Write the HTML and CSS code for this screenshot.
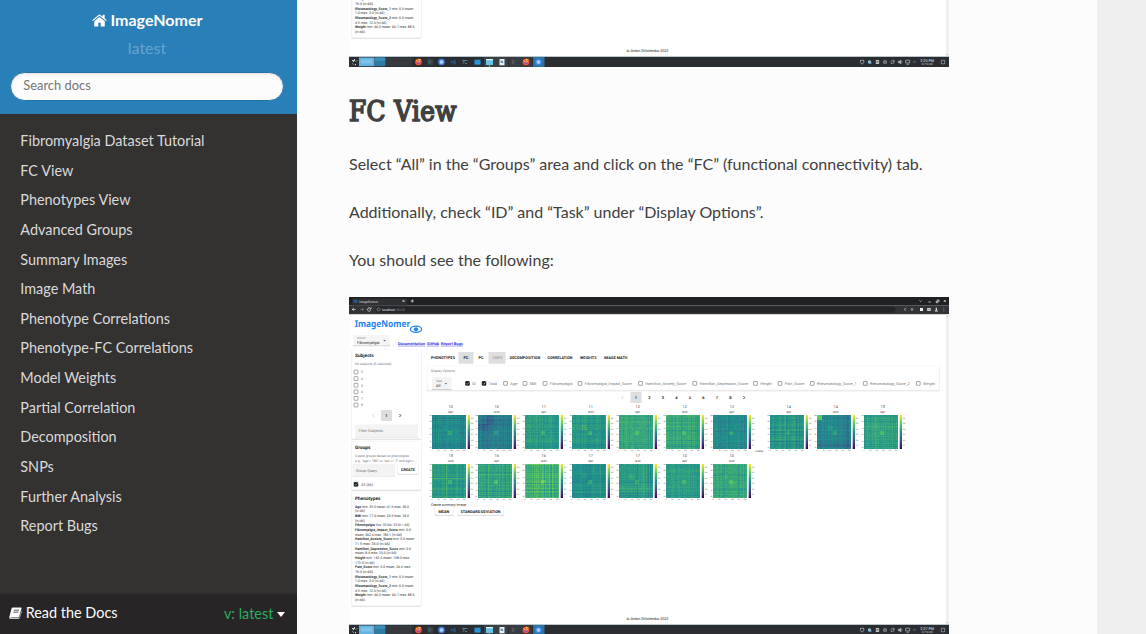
FILE: index.html
```html
<!DOCTYPE html>
<html lang="en">
<head>
<meta charset="utf-8">
<title>FC View — ImageNomer</title>
<link rel="stylesheet" href="styles.css">
</head>
<body>
<div class="page">
  <nav class="side">
    <div class="side-search">
      <a class="brand"><svg class="home" viewBox="0 0 15 13"><path d="M7.5 2.9 2.2 7.3V12c0 .4.2.6.6.6h3.5V8.8h2.4v3.8h3.500c.4 0 .6-.2.6-.6V7.300z"/><path d="M12.700 4.600V.8h-1.900v2L8.300.7a1.300 1.300 0 0 0-1.600 0L.2 6.200l.8.9 6.500-5.400L14 7.100l.8-.9z"/></svg> ImageNomer</a>
      <div class="version">latest</div>
      <input class="search" type="text" placeholder="Search docs">
    </div>
    <ul class="menu">
      <li>Fibromyalgia Dataset Tutorial</li><li>FC View</li><li>Phenotypes View</li><li>Advanced Groups</li><li>Summary Images</li><li>Image Math</li><li>Phenotype Correlations</li><li>Phenotype-FC Correlations</li><li>Model Weights</li><li>Partial Correlation</li><li>Decomposition</li><li>SNPs</li><li>Further Analysis</li><li>Report Bugs</li>
    </ul>
    <div class="versions">
      <span class="rtd"><svg class="book" viewBox="0 0 14 13"><path d="M4.200.5h8.300c.9 0 1.300.6 1 1.400l-2.500 8.500c-.2.700-.7 1.100-1.400 1.100H2c-.5 0-.6.600.1.700h8.100c.5 0 .8-.2 1-.7L13.700 4c.3.300.3.700.1 1.200l-2.300 6.600c-.3.700-.8 1.100-1.500 1.100H2C.8 12.900 0 12 .3 10.900L2.700 1.700C2.900.9 3.400.5 4.200.5z"/><path class="book-lines" d="M5.200 3.500h5.600M4.600 5.600h5.600"/></svg> Read the Docs</span>
      <span class="current">v: latest <i class="caret"></i></span>
    </div>
  </nav>
  <main class="content">
    <svg class="shot shot-tail" id="shot-a" viewBox="349 568 600 67"></svg>
    <h1>FC View</h1>
    <p>Select “All” in the “Groups” area and click on the “FC” (functional connectivity) tab.</p>
    <p>Additionally, check “ID” and “Task” under “Display Options”.</p>
    <p>You should see the following:</p>
    <svg class="shot shot-full" id="shot-b" viewBox="349 297 600 338"></svg>
  </main>
</div>
<script src="shots.js"></script>
</body>
</html>
```
FILE: styles.css
```css
* { box-sizing: border-box; }
body { margin: 0; height: 634px; overflow: hidden; background: #efefef; color: #404040; font-family: Lato, "Noto Sans", sans-serif; font-size: 16px; line-height: 24px; }
.page { display: flex; height: 634px; }
.side { width: 297px; flex: none; background: #343131; display: flex; flex-direction: column; }
.side-search { height: 114px; flex: none; background: #2980b9; color: #fcfcfc; display: flex; flex-direction: column; align-items: center; padding: 8px 13px 0 10px; }
.brand { font-weight: 700; line-height: 24px; }
.home { width: 15px; height: 13px; fill: #fcfcfc; vertical-align: -1px; }
.version { color: rgba(255, 255, 255, .3); line-height: 24px; margin-top: 4px; }
.search { width: 273.500px; height: 29px; margin-top: 12px; padding: 0 12px 3px; border: 1px solid #2472a4; border-radius: 50px; background: #fcfcfc; box-shadow: inset 0 1px 3px #ddd; font: 12.900px Lato, sans-serif; color: #404040; }
.search::placeholder { color: #757575; }
.menu { list-style: none; margin: 0; padding: 12px 20px 0 20.300px; flex: 1; color: #d9d9d9; font-size: 14.430px; line-height: 29.620px; }
.versions { height: 40px; flex: none; background: #272525; color: #fcfcfc; display: flex; justify-content: space-between; padding: 7px 12px 0 9px; font-size: 14.430px; }
.book { width: 13px; height: 12px; fill: #fcfcfc; vertical-align: -1px; }
.book-lines { stroke: #272525; stroke-width: .8; }
.current { color: #27ae60; padding-top: 1px; }
.caret { display: inline-block; border: 4.500px solid transparent; border-top-color: #fcfcfc; border-bottom: 0; border-top-width: 5px; vertical-align: 2px; }
.content { width: 800px; flex: none; background: #fcfcfc; padding: 0 52px; }
.shot { display: block; width: 600px; font-family: Roboto, sans-serif; text-rendering: geometricPrecision; }
.shot-tail { height: 67px; }
.shot-full { height: 338px; margin-top: 25px; }
h1 { margin: 26px 0 23px; height: 36px; font: 400 27.500px/37px "DejaVu Serif Condensed", "DejaVu Serif", serif; font-stretch: condensed; -webkit-text-stroke: 1.600px #404040; letter-spacing: .4px; }
p { margin: 0 0 24px; }
```
FILE: shots.js
```js
// Draws the application window figures used in the tutorial.
const GREY = '#777', INK = '#222';
let minY = 0;
function T(x, y, s, w, o = {}) {
  if (y < minY) return '';
  const len = w ? ` textLength="${w}" lengthAdjust="spacingAndGlyphs"` : '';
  return `<text x="${x}" y="${y}" font-size="${o.size || 3.8}" fill="${o.fill || INK}" font-weight="${o.bold ? 700 : 400}"${o.mid ? ' text-anchor="middle"' : ''}${len}${o.more || ''}>${s}</text>`;
}
function R(x, y, w, h, fill, more = '') {
  return `<rect x="${x}" y="${y}" width="${w}" height="${h}" fill="${fill}" ${more}/>`;
}
function P(d, stroke, w = .7, fill = 'none') {
  return `<path d="${d}" stroke="${stroke}" stroke-width="${w}" fill="${fill}"/>`;
}
function card(x, y, w, h) {
  return R(x, y, w, h + .8, '#dcdcdc', 'rx=".8"') + R(x + .2, y - .3, w - .4, h, '#fff', 'rx=".8" stroke="#f3f3f3" stroke-width=".5"');
}
function box(x, y, on) {
  return R(x - 1.9, y - 1.9, 3.8, 3.8, on ? '#111' : '#fff', `rx=".4" stroke="${on ? '#111' : '#777'}" stroke-width=".65"`) + (on ? P(`M${x - 1.2} ${y}l.9 1 1.700-2`, '#fff', .6) : '');
}
const STOPS = [[68,1,84],[59,82,139],[33,145,140],[94,201,98],[253,231,37]];
function viridis(t) {
  t = Math.max(0, Math.min(.999, t)) * 4;
  const i = Math.floor(t), f = t - i;
  return 'rgb(' + STOPS[i].map((c, k) => Math.round(c + (STOPS[i + 1][k] - c) * f)) + ')';
}
function heat(x, y, seed, base, contrast, spots) {
  let s = seed * 7919 + 13;
  const rnd = () => (s = (s * 16807) % 2147483647) / 2147483647;
  for (let k = 0; k < 6; k++) rnd();
  const n = 34, line = [], groups = {};
  for (let i = 0; i < n; i++) line.push((rnd() - .5) * (rnd() > .75 ? 1.5 : .5) * contrast);
  line[31] -= .05; line[29] -= .05;
  for (let i = 0; i < n; i++) for (let j = 0; j <= i; j++) {
    let v = base + line[i] + line[j] + (rnd() - .5) * .05;
    if (i > 15 && i < 20 && j > 15) v += .11;
    if (spots && i > 9 && i < 15 && j > 9 && j < 15) v += .05;
    if (spots === 2 && i < 5 && j < 5) v += .3;
    if (spots === 3 && i > 8 && i < 16 && j < 16) v -= .08;
    const q = Math.round(v * 30) / 30;
    groups[q] = (groups[q] || '') + `M${j} ${i}h1v1h-1z` + (i !== j ? `M${i} ${j}h1v1h-1z` : '');
  }
  let o = `<g transform="translate(${x} ${y})" shape-rendering="crispEdges">` + R(0, 0, 34, 34, viridis(base));
  for (const q in groups) o += `<path fill="${viridis(+q)}" d="${groups[q]}"/>`;
  o += '</g>' + R(x + 35.700, y, 2.300, 34, 'url(#viridis)');
  for (let k = 0; k < 6; k++) o += T(x + 38.700, y + 4 + k * 5.400, ['0.8', '0.6', '0.4', '0.2', '0.0', '-0.2'][k], 2.500, { size: 1.7 });
  ['0', '50', '100', '150', '200', '250'].forEach((t, k) => {
    o += T(x + k * 6.400, y + 36.200, t, 0, { size: 1.6, mid: 1 });
    o += T(x - 2.600, y + 1 + k * 6.400, t, 2, { size: 1.6 });
  });
  return o;
}
function firefox(x) {
  return `<circle cx="${x}" cy="630" r="3.300" fill="#ff4f37"/><circle cx="${x + .2}" cy="630.200" r="1.700" fill="#7849c8"/>` + P(`M${x - 2.500} 628q1 3 4 2l-1.500-3 2.500 1`, '#ffb52e', 1);
}
function chromium(x) {
  return `<circle cx="${x}" cy="630" r="3.300" fill="#3f7fe8"/><circle cx="${x}" cy="630" r="1.500" fill="#a9c8f8" stroke="#e6effd" stroke-width=".5"/>`;
}
function taskbar(time) {
  let o = R(349, 624.200, 600, .8, '#aab8bb') + R(349, 625, 600, 10, '#2a2e32');
  o += P('M352 628.500h1.500v1.500M354.500 627v2M357 628.500l-1 1M352.500 631.500l1 1M355.500 632v1.200', '#e9eef0', .9);
  o += R(359, 625.500, 15.500, 8.700, '#64b4df') + R(361, 627.500, 11, 4, '#7bc4e8') + R(375, 625.500, 10.500, 8.700, '#2d7ba1') + R(375, 625.500, 10, 3.500, '#388fb9') + R(386, 625.500, 26, 8.700, '#363a3e');
  o += R(484, 625, 24, 10, '#3b4044') + R(509, 625, 23, 10, '#373c40') + R(533, 625, 11.500, 10, '#2c75a0');
  o += firefox(418.500) + chromium(441.500) + firefox(526) + chromium(538.500);
  [430, 513.500].forEach(x => o += R(x - 2.500, 627.200, 5.500, 5.500, '#3c4348') + P(`M${x - 1.500} 628.300l2 1.700-2 1.700`, '#8b979d', .5));
  o += P('M450.800 628.500l4.200 3.400M450.800 631.500l4.200-3.400v4.500', '#2269a0', .9);
  o += P('M462.500 628.500h5M462.500 628.500l2 1.500-2 1.500M465 631.500h2', '#86a9bc', .6);
  o += R(474.500, 627.700, 6, 4.900, '#259be5') + P('M475 628l2.500 2 2.500-2', '#1768b5', .5);
  o += R(486, 627, 7, 6, '#65c2e9') + R(486, 627, 7, 1.200, '#d9f2f8') + R(488.800, 633.500, 1.300, 1.300, '#5ee675');
  o += R(499.500, 627, 5, 6.300, '#e8eef1') + P('M500.500 630h2.500M501 628.500l2 2.500', '#26729a', .9);
  const c = '#b9bec1';
  o += P('M860.500 628.300h3.500l-.5 2.500-1.300 1.500-1.500-1.500z', c) + `<circle cx="869.500" cy="630" r="1.700" fill="#9dbacb"/>` + R(870, 630.500, 1.500, 1.500, '#329ce0');
  o += R(875.800, 628, 3.300, 4, c) + R(876.500, 629.500, 1.800, .7, '#2a2e32');
  o += `<circle cx="885" cy="630" r="1.700" fill="none" stroke="#a9b0b3" stroke-width=".6"/>` + R(884.300, 629.300, 1.400, 1.400, '#aaa');
  o += P('M891 629h2.500v2.500h-2.500zM892 628.200h2.300v2.300', c, .5);
  o += P('M898.300 629.200h1l1.400-1.200v4l-1.400-1.200h-1z', c, .5, c) + P('M901.500 628.500q1 1.500 0 3', c, .5);
  o += P('M905.700 628.200h4v2.800h-4zM906.500 632.300h2.500', c) + P('M913 630.500l1.500-1.200 1.500 1.200', c, .5);
  o += T(920.300, 629.900, time, 13.800, { fill: '#e5e7e8', size: 4 }) + T(921.800, 633.300, '6/19/23', 11, { fill: '#d5d8da', size: 3 });
  return o + P('M941.300 628.300h3.400v3.500h-3.400z', c, .6);
}
const PHENO = [['Age','min: 29.0 mean: 41.6 max: 50.0',54],['','(n=66)',10],['BMI','min: 17.4 mean: 25.9 max: 34.0',54],['','(n=66)',10],['Fibromyalgia','Yes: 33 No: 33 (n = 66)',54.500],['Fibromyalgia_Impact_Score','min: 0.0',56],['','mean: 262.4 max: 786.1 (n=66)',47],['Hamilton_Anxiety_Score','min: 0.0 mean:',60],['','11.9 max: 35.0 (n=66)',35],['Hamilton_Depression_Score','min: 0.0',56],['','mean: 8.4 max: 25.0 (n=66)',41.500],['Height','min: 142.0 mean: 158.0 max:',55],['','173.0 (n=66)',19.500],['Pain_Score','min: 0.0 mean: 24.4 max:',56],['','76.0 (n=66)',18],['Rheumatology_Score_1','min: 0.0 mean:',59],['','1.0 max: 3.0 (n=66)',29.500],['Rheumatology_Score_2','min: 0.0 mean:',59],['','4.9 max: 12.0 (n=66)',31.500],['Weight','min: 46.0 mean: 64.7 max: 88.5',59.500],['','(n=66)',10]];
function draw(id, time, firstY) {
  minY = firstY;
  let o = `<defs><linearGradient id="viridis" x2="0" y2="1"><stop stop-color="#fde725"/><stop offset=".25" stop-color="#5ec962"/><stop offset=".5" stop-color="#21918c"/><stop offset=".75" stop-color="#3b528b"/><stop offset="1" stop-color="#440154"/></linearGradient></defs>`;
  o += R(349, 297, 600, 338, '#fff') + R(349, 297, 600, 8.300, '#202124') + R(352, 298.500, 55, 7, '#2f3034', 'rx="1"') + R(349, 305.300, 600, 8.700, '#323337') + R(349, 314, 600, .6, '#bbb');
  o += `<ellipse cx="355.500" cy="301.300" rx="1.700" ry="1" fill="none" stroke="#2486ef" stroke-width=".8"/>` + T(359, 302.500, 'ImageNomer', 19, { fill: '#d5d5d5', size: 3.500 });
  o += P('M402.500 300l2 2M404.500 300l-2 2M410.700 301h3.200M412.300 299.400v3.200', '#eee', .7) + P('M352.300 309.400h3.300M353.800 308l-1.500 1.400 1.500 1.400', '#eee', .7) + P('M360.300 309.400h3.300M362 308l1.500 1.400-1.500 1.400', '#888', .6) + P('M370.500 308.500a1.700 1.700 0 1 0 .2 1.700M371 307.500v1.500h-1.500', '#eee', .7);
  o += R(375.500, 306.500, 520, 6, '#242529', 'rx="3"') + `<circle cx="378.500" cy="309.400" r="1.500" fill="none" stroke="#aaa" stroke-width=".6"/>` + T(382, 310.700, 'localhost', 13, { fill: '#eee', size: 3.500 }) + T(395.300, 310.700, ':8008', 9.500, { fill: '#777', size: 3.500 });
  o += P('M919.500 300.500l1 1 1-1M928.300 302h2.500M936.200 301h1.700v1.700h-1.700zM937 300h2v2M943.800 300l2 2M945.800 300l-2 2', '#eee', .7) + P('M906.300 308l-2.200 1.400 2.200 1.400', '#ccc', .6) + `<circle cx="912" cy="309.400" r="1.300" fill="#888"/>` + R(920, 308, 3, 3, '#eee') + R(927.300, 308, 3.300, 3, '#eee') + R(928.500, 308.700, 1, 1.600, '#333') + P('M934.800 311h3M936.300 307.800v2.500', '#eee', 1.200) + P('M943.800 307.700v.8M943.800 309.200v.8M943.800 310.700v.8', '#aaa', .7);
  o += R(945.700, 314.600, 3.300, 310, '#f0f0f0') + P('M946.500 317l.8-.8.8.8M946.500 622l.8.8.8-.8', '#777', .4);
  o += T(354.700, 327.400, 'ImageNomer', 55.500, { size: 9.300, bold: 1, fill: '#2385f1', more: ' font-family="Noto Sans"' });
  o += `<ellipse cx="416" cy="329.300" rx="5.600" ry="3.100" fill="#fff" stroke="#2385f1" stroke-width="1.300"/><circle cx="416" cy="329.300" r="2.100" fill="#2385f1"/>`;
  o += R(353, 335, 37, 11, '#f5f5f5') + R(353, 345.700, 37, .4, '#aaa') + T(357, 338.800, 'Cohort', 8.500, { size: 3, fill: GREY }) + T(357, 343.500, 'Fibromyalgia', 22.500, { size: 4 }) + P('M383.300 340.200h2.400l-1.200 1.200z', '#555', .1, '#555');
  [[398,'Documentation',27],[427,'GitHub',12],[441,'Report Bugs',21.700]].forEach(a => o += T(a[0], 345.200, a[1], a[2], { size: 4, fill: '#3932e3', bold: 1 }) + R(a[0], 345.800, a[2], .45, '#3932e3'));
  o += card(351.500, 350, 70, 89) + card(351.500, 441.500, 70, 48.500) + card(351.500, 492, 70, 114);
  o += T(355, 356.800, 'Subjects', 18.700, { size: 4.700, bold: 1 }) + T(355, 364.500, '66 subjects (0 selected)', 36.500, { size: 3.400, fill: GREY });
  ['2','4','5','6','7','8'].forEach((t, i) => o += box(356, 372 + i * 6.600) + T(361, 373.300 + i * 6.600, t, 0, { fill: GREY, size: 3.600 }));
  o += R(381, 410, 11, 11, '#dedede') + T(386.500, 417, '1', 0, { mid: 1, bold: 1, size: 4 }) + P('M373.700 414.200l-1.200 1.300 1.200 1.300', '#bbb') + P('M399.500 414l1.300 1.500-1.300 1.500', '#222', .8);
  o += R(355, 424.500, 63, 13, '#f3f3f3') + R(355, 437, 63, .5, '#ddd') + T(358.500, 432, 'Filter Subjects', 24.500, { fill: GREY, size: 3.800 });
  o += T(355, 449, 'Groups', 15.500, { size: 4.700, bold: 1 }) + T(355, 457, 'Create groups based on phenotypes', 54, { size: 3.500, fill: GREY }) + T(355, 461.700, 'e.g., "age &gt; 180" or "sex == \'F\' and age &lt; ...', 62, { size: 3.500, fill: GREY });
  o += R(352.500, 464, 43, 12.300, '#f3f3f3') + R(352.500, 476, 43, .5, '#ddd') + T(356, 471.500, 'Group Query', 21, { fill: GREY, size: 3.700 }) + card(397.500, 464.500, 21, 9.700) + T(401, 471.400, 'CREATE', 14, { bold: 1 });
  o += box(356, 484.300, 1) + T(361, 485.700, 'All (66)', 12, { fill: '#555' }) + T(355, 499.700, 'Phenotypes', 25.500, { size: 4.700, bold: 1 });
  PHENO.forEach((a, i) => {
    // Lines without a name are wrapped continuations; widths are in figure units.
    o += T(355, 507.600 + i * 4.670, (a[0] ? `<tspan font-weight="700">${a[0]}</tspan> ` : '') + a[1], a[2], { size: 3.600, fill: '#333' });
  });
  o += R(458.500, 352, 15, 11.700, '#dedede') + R(488.500, 352, 17, 11.700, '#dedede');
  [[431,'PHENOTYPES',24],[463.500,'FC',5],[478.500,'PC',5],[492.500,'SNPS',10],[509.700,'DECOMPOSITION',30.500],[547.500,'CORRELATION',25],[580,'WEIGHTS',16.500],[604,'IMAGE MATH',23.500]].forEach(a => o += T(a[0], 359.200, a[1], a[2], { bold: 1, fill: a[1] === 'SNPS' ? '#aaa' : INK }));
  o += card(427, 366, 512.500, 24.500) + T(431, 371.500, 'Display Options', 23.700, { size: 3.500, fill: GREY }) + R(432, 376.700, 19.500, 13, '#f3f3f3') + R(432, 389.400, 19.500, .4, '#999') + T(436, 381.600, 'Task', 6, { size: 2.900, fill: GREY }) + T(436, 386.800, 'All', 4.300, {}) + P('M444.800 383h2.200l-1.100 1.200z', '#555', .1, '#555');
  [[467.500,'ID',3.500],[484,'Task',8.500],[505.500,'Age',7],[525,'BMI',6.500],[545,'Fibromyalgia',22.500],[580,'Fibromyalgia_Impact_Score',47],[640.500,'Hamilton_Anxiety_Score',41],[694.700,'Hamilton_Depression_Score',48.500],[755.500,'Height',11.500],[780,'Pain_Score',19.500],[812.300,'Rheumatology_Score_1',39.500],[865.300,'Rheumatology_Score_2',39.500],[918.300,'Weight',12]].forEach((a, i) => o += box(a[0], 383.400, i < 2) + T(a[0] + 4.800, 384.700, a[1], a[2], { fill: GREY }));
  o += R(630.500, 392, 11, 11, '#dedede') + P('M623 396.300l-1.200 1.300 1.200 1.300', '#bbb') + P('M743.400 396.100l1.300 1.500-1.300 1.500', '#222', .8);
  for (let i = 0; i < 8; i++) o += T(636 + i * 13.500, 399, i + 1, 0, { mid: 1, bold: 1, size: 4 });
  if (id === 'shot-b') {
    const cells = [[432,415,'10','epr',.46,.1,1],[478,415,'10','rest',.42,.09,3],[525,415,'11','epr',.54,.07,0],[572,415,'11','rest',.52,.08,1],[619,415,'12','epr',.6,.07,0],[666,415,'12','rest',.6,.12,0],[713,415,'13','epr',.48,.06,0],[770,415,'14','epr',.53,.11,0],[817,415,'14','rest',.45,.12,2],[864,415,'15','epr',.57,.09,0],[432,464,'15','rest',.56,.13,0],[478,464,'16','epr',.58,.1,0],[525,464,'16','rest',.68,.18,0],[572,464,'17','epr',.51,.08,1],[619,464,'17','rest',.53,.1,1],[666,464,'18','epr',.56,.09,0],[713,464,'18','rest',.6,.1,1]];
    cells.forEach((c, i) => o += T(c[0] + 18.700, c[1] - 6.700, c[2], 0, { mid: 1, fill: '#444' }) + T(c[0] + 18.700, c[1] - 2.200, c[3], 0, { mid: 1, size: 3.500, fill: '#555' }) + heat(c[0], c[1], i + 3, c[4], c[5], c[6]));
    o += T(755.300, 452.200, 'Loading...', 9.500, { size: 2.800 });
  }
  o += T(431, 505.500, 'Create summary image:', 35.500, { size: 3.700 }) + card(434.500, 506.500, 19, 8.700) + card(457, 506.500, 47, 8.700) + T(438.500, 512.500, 'MEAN', 10.700, { bold: 1 }) + T(460.500, 512.500, 'STANDARD DEVIATION', 40, { bold: 1 });
  o += T(626.500, 620, '© Anton Orlichenko 2023', 42, { size: 3.800 }) + taskbar(time);
  document.getElementById(id).innerHTML = o;
}
draw('shot-a', '2:25 PM', 568);
draw('shot-b', '2:27 PM', 0);
```
